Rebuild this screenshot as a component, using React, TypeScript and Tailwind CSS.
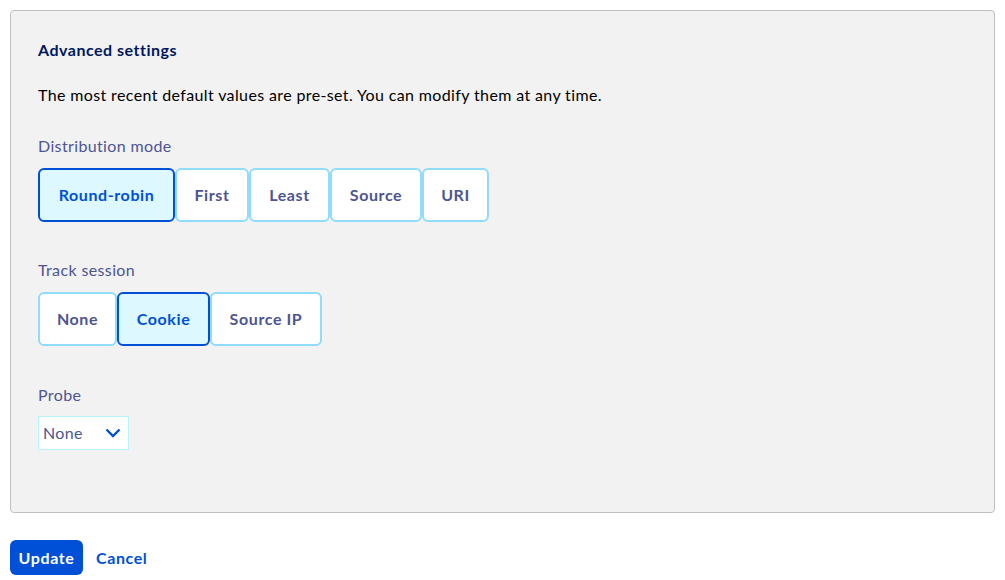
const distribution = [
  { label: "Round-robin", w: "w-[137px]" },
  { label: "First", w: "w-[74px]" },
  { label: "Least", w: "w-[81px]" },
  { label: "Source", w: "w-[92px]" },
  { label: "URI", w: "w-[67px]" },
];

const session = [
  { label: "None", w: "w-[79px]" },
  { label: "Cookie", w: "w-[93px]" },
  { label: "Source IP", w: "w-[112px]" },
];

function Tile({ label, w, active }: { label: string; w: string; active?: boolean }) {
  return (
    <button
      className={
        "h-[54px] rounded-md border-2 text-[16px] font-bold tracking-[0.6px] " +
        w +
        (active
          ? " border-[#0050d7] bg-[#def8ff] text-[#0050d7]"
          : " border-[#8fdcfc] bg-white text-[#4d5592]")
      }
    >
      {label}
    </button>
  );
}

export default function App() {
  return (
    <div className="w-[1005px] h-[580px] bg-white px-[10px] pt-[10px] font-['Lato',sans-serif] tracking-[0.37px]">
      <div className="h-[503px] rounded-sm border border-[#bfbfbf] bg-[#f2f2f2] px-[27px] pt-[29px]">
        <h2 className="text-[16px] font-bold leading-[20px] tracking-[0.5px] text-[#00185e]">Advanced settings</h2>
        <p className="mt-[25px] text-[16px] leading-[20px] text-[#000]">
          The most recent default values are pre-set. You can modify them at any time.
        </p>

        <div className="mt-[31px] text-[16px] leading-[20px] text-[#4d5592]">Distribution mode</div>
        <div className="mt-[12px] flex">
          {distribution.map((d, i) => (
            <Tile key={d.label} label={d.label} w={d.w} active={i === 0} />
          ))}
        </div>

        <div className="mt-[38px] text-[16px] leading-[20px] text-[#4d5592]">Track session</div>
        <div className="mt-[12px] flex">
          {session.map((d, i) => (
            <Tile key={d.label} label={d.label} w={d.w} active={i === 1} />
          ))}
        </div>

        <div className="mt-[39px] text-[16px] leading-[20px] text-[#4d5592]">Probe</div>
        <div className="mt-[11px] flex h-[34px] w-[91px] items-center justify-between border border-[#b8f2ff] bg-white pl-[4px] pr-[7px]">
          <span className="text-[16px] text-[#4d5592]">None</span>
          <svg width="16" height="10" viewBox="0 0 16 10" fill="none">
            <path d="M1.5 1.5 L8 8 L14.5 1.5" stroke="#0050d7" strokeWidth="2.4" />
          </svg>
        </div>
      </div>

      <div className="mt-[27px] flex items-center gap-[13px]">
        <button className="h-[35px] w-[73px] rounded-md bg-[#0050d7] text-[16px] font-bold tracking-[0.6px] text-white">
          Update
        </button>
        <button className="text-[16px] font-bold tracking-[0.6px] text-[#0050d7]">Cancel</button>
      </div>
    </div>
  );
}
